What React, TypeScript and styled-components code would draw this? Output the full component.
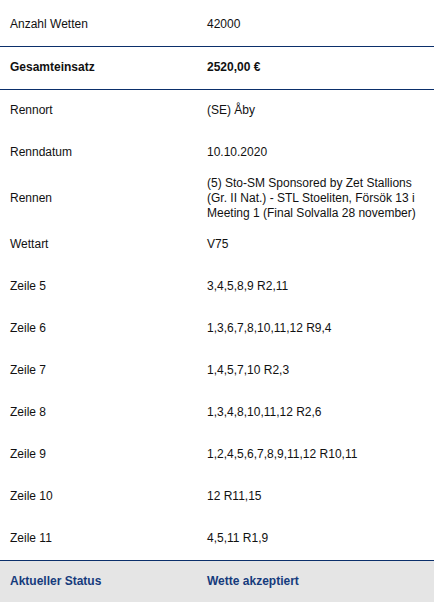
import React from "react";
import styled, { createGlobalStyle } from "styled-components";

const GlobalStyle = createGlobalStyle`
  html, body { margin: 0; padding: 0; background: #ffffff; }
  body { font-family: "Liberation Sans", Arial, sans-serif; font-size: 12px; color: #111111; }
`;

const Table = styled.div`
  display: flex;
  flex-direction: column;
  width: 434px;
  padding-top: 4px;
`;

const Row = styled.div<{ $strong?: boolean; $status?: boolean; $divider?: boolean }>`
  display: grid;
  grid-template-columns: 197px 1fr;
  align-items: center;
  box-sizing: content-box;
  min-height: 37px;
  padding: 2px 0 3px 10px;
  line-height: 15px;
  font-weight: ${(p) => (p.$strong || p.$status ? 700 : 400)};
  color: ${(p) => (p.$status ? "#163b7c" : "#111111")};
  background: ${(p) => (p.$status ? "#e5e5e5" : "transparent")};
  border-bottom: ${(p) => (p.$divider ? "1px solid #0b2f6b" : "none")};
`;

const Label = styled.div``;

const Value = styled.div``;

const rows: { label: string; value: string }[] = [
  { label: "Rennort", value: "(SE) Åby" },
  { label: "Renndatum", value: "10.10.2020" },
  {
    label: "Rennen",
    value:
      "(5) Sto-SM Sponsored by Zet Stallions (Gr. II Nat.) - STL Stoeliten, Försök 13 i Meeting 1 (Final Solvalla 28 november)",
  },
  { label: "Wettart", value: "V75" },
  { label: "Zeile 5", value: "3,4,5,8,9 R2,11" },
  { label: "Zeile 6", value: "1,3,6,7,8,10,11,12 R9,4" },
  { label: "Zeile 7", value: "1,4,5,7,10 R2,3" },
  { label: "Zeile 8", value: "1,3,4,8,10,11,12 R2,6" },
  { label: "Zeile 9", value: "1,2,4,5,6,7,8,9,11,12 R10,11" },
  { label: "Zeile 10", value: "12 R11,15" },
];

export default function App() {
  return (
    <>
      <GlobalStyle />
      <Table>
        <Row $divider>
          <Label>Anzahl Wetten</Label>
          <Value>42000</Value>
        </Row>
        <Row $strong $divider>
          <Label>Gesamteinsatz</Label>
          <Value>2520,00 €</Value>
        </Row>
        {rows.map((r) => (
          <Row key={r.label}>
            <Label>{r.label}</Label>
            <Value>{r.value}</Value>
          </Row>
        ))}
        <Row $divider>
          <Label>Zeile 11</Label>
          <Value>4,5,11 R1,9</Value>
        </Row>
        <Row $status>
          <Label>Aktueller Status</Label>
          <Value>Wette akzeptiert</Value>
        </Row>
      </Table>
    </>
  );
}
